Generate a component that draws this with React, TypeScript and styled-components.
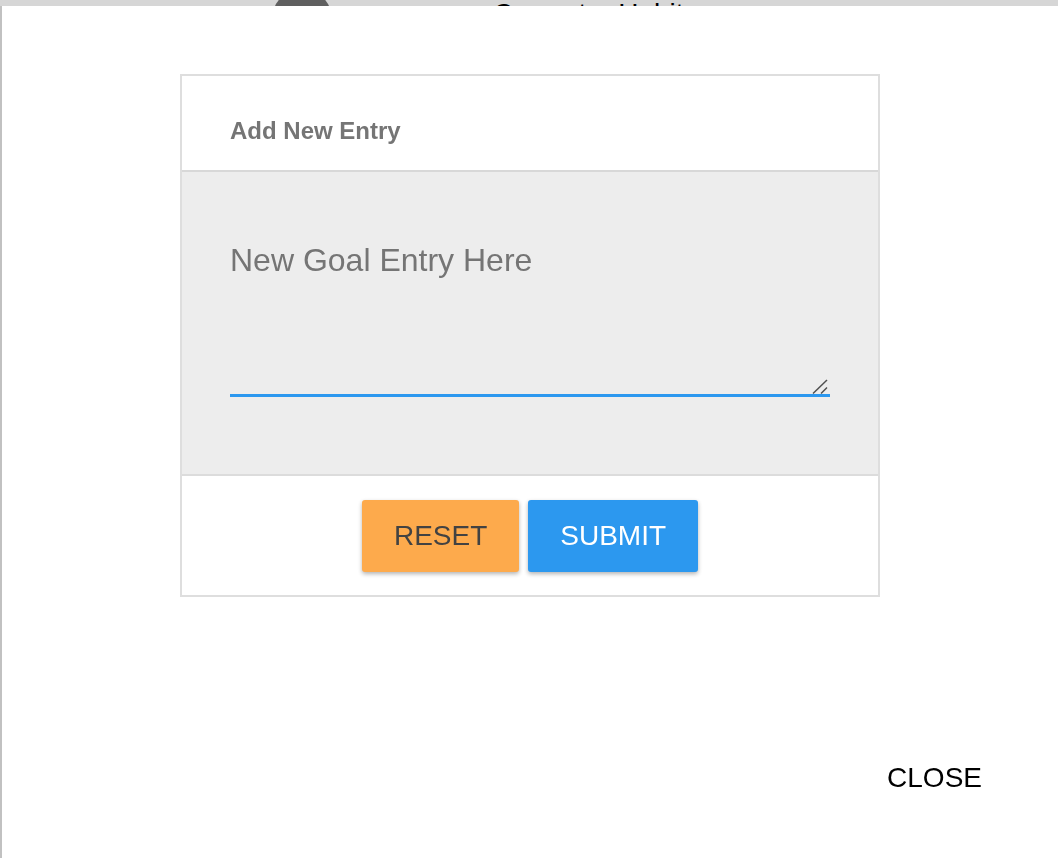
import styled, { createGlobalStyle } from "styled-components";

const GlobalStyle = createGlobalStyle`
	html, body {
		margin: 0;
		height: 100%;
		overflow: hidden;
		font-family: "Liberation Sans", Arial, sans-serif;
	}
`;

const Page = styled.div`
	min-height: 100vh;
	background-color: #ffffff;
`;

const PageHeader = styled.div`
	display: flex;
	align-items: flex-start;
	gap: 161px;
	padding-left: 272px;
	margin-top: -11px;
`;

const Avatar = styled.div`
	width: 60px;
	height: 60px;
	border-radius: 50%;
	background-color: #727272;
`;

const PageTitle = styled.h1`
	margin: 0;
	padding-top: 9px;
	font-size: 28px;
	font-weight: normal;
	word-spacing: 24px;
	color: #000;
`;

const BackDrop = styled.div`
	position: fixed;
	inset: 0;
	display: flex;
	padding: 6px 0 0 2px;
	background-color: rgba(0, 0, 0, 0.16);
`;

const Dialog = styled.div`
	flex: 1;
	display: flex;
	flex-direction: column;
	background-color: #ffffff;
	box-shadow: -2px 0 0 rgba(0, 0, 0, 0.1);
`;

const DialogBody = styled.div`
	flex: 1;
	padding-top: 68px;
`;

const Card = styled.form`
	width: 700px;
	margin: 0 auto;
	box-sizing: border-box;
	border: 2px solid #dedede;
	background-color: #ffffff;
`;

const CardHeader = styled.div`
	padding: 41px 48px 25px;
	border-bottom: 2px solid #d8d8d8;
`;

const CardTitle = styled.span`
	display: block;
	font-size: 24px;
	line-height: 28px;
	font-weight: bold;
	color: #757575;
`;

const CardBody = styled.div`
	padding: 70px 48px 77px;
	background-color: #ededed;
`;

const InputWrap = styled.div`
	position: relative;
`;

const EntryInput = styled.textarea`
	display: block;
	width: 100%;
	height: 155px;
	box-sizing: border-box;
	padding: 0;
	border: none;
	border-bottom: 3px solid #2c98ef;
	outline: none;
	background: transparent;
	resize: none;
	font-family: "Liberation Sans", Arial, sans-serif;
	font-size: 32px;
	color: #424242;

	&::placeholder {
		color: #757575;
	}
`;

const ResizeGrip = styled.svg`
	position: absolute;
	right: 2px;
	bottom: 3px;
	width: 16px;
	height: 15px;
	pointer-events: none;
`;

const CardFooter = styled.div`
	display: flex;
	justify-content: center;
	gap: 9px;
	padding: 24px 0 23px;
	border-top: 2px solid #dcdcdc;
`;

const ActionButton = styled.button<{ $variant: "reset" | "submit" }>`
	height: 72px;
	padding: 0 32px;
	border: none;
	border-radius: 3px;
	font-family: "Liberation Sans", Arial, sans-serif;
	font-size: 28px;
	cursor: pointer;
	box-shadow: 0 2px 4px rgba(0, 0, 0, 0.3);
	background-color: ${(p) => (p.$variant === "reset" ? "#fdaa4c" : "#2c98ef")};
	color: ${(p) => (p.$variant === "reset" ? "#424242" : "#ffffff")};
`;

const DialogActions = styled.div`
	display: flex;
	justify-content: flex-end;
	padding: 0 76px 64px 0;
`;

const CloseButton = styled.button`
	padding: 0;
	border: none;
	background: transparent;
	font-family: "Liberation Sans", Arial, sans-serif;
	font-size: 28px;
	line-height: normal;
	color: #000;
	cursor: pointer;
`;

const App = () => {
	return (
		<>
			<GlobalStyle />
			<Page>
				<PageHeader>
					<Avatar />
					<PageTitle>Current Habits</PageTitle>
				</PageHeader>
			</Page>
			<BackDrop>
				<Dialog>
					<DialogBody>
						<Card onSubmit={(e) => e.preventDefault()}>
							<CardHeader>
								<CardTitle>Add New Entry</CardTitle>
							</CardHeader>
							<CardBody>
								<InputWrap>
									<EntryInput placeholder="New Goal Entry Here" />
									<ResizeGrip viewBox="0 0 16 15">
										<path d="M1 14.5L15 1" stroke="#505050" strokeWidth="1.5" />
										<path d="M9 14.5L15 8.5" stroke="#505050" strokeWidth="1.5" />
									</ResizeGrip>
								</InputWrap>
							</CardBody>
							<CardFooter>
								<ActionButton type="reset" $variant="reset">
									RESET
								</ActionButton>
								<ActionButton type="submit" $variant="submit">
									SUBMIT
								</ActionButton>
							</CardFooter>
						</Card>
					</DialogBody>
					<DialogActions>
						<CloseButton>CLOSE</CloseButton>
					</DialogActions>
				</Dialog>
			</BackDrop>
		</>
	);
};

export default App;
